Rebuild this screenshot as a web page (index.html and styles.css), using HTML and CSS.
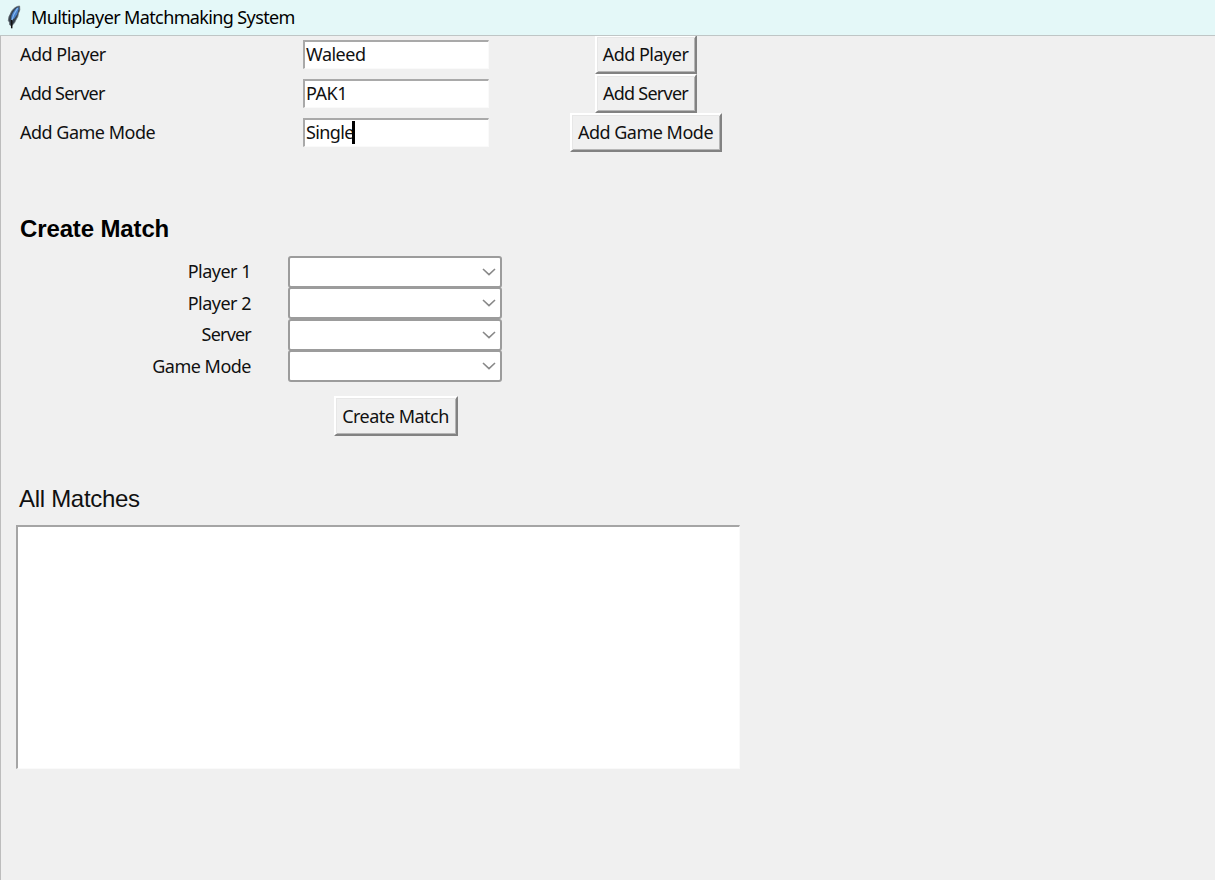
FILE: index.html
```
<!DOCTYPE html>
<html lang="en">
<head>
<meta charset="utf-8">
<title>Multiplayer Matchmaking System</title>
<link rel="stylesheet" href="styles.css">
</head>
<body>
<header class="titlebar">
  <svg class="feather" viewBox="0 0 16 26" aria-hidden="true">
    <path d="M13.6 2C10.5 2.2 7.6 4.2 5.6 7.2L4.2 10.2L3 12.5L2.3 16.5L3.4 18.2L3.8 21L5.8 21.8L8.5 18.8L9.6 16.5L11.8 12.5L12.4 9.5L13.8 6Z" fill="#36414c" stroke="#626b72" stroke-width="0.8"/>
    <path d="M12.6 3C9.5 4 6.8 8 5.4 12L5 16L8.4 14.5L11.2 10.3L12.6 5.7Z" fill="#477fc8"/>
    <path d="M11.6 4.2C8.8 8 6.8 12 5.7 17" fill="none" stroke="#8bbcf1" stroke-width="1.1"/>
    <path d="M5.7 16V24.3" stroke="#111" stroke-width="1.5"/>
  </svg>
  <span class="title">Multiplayer Matchmaking System</span>
</header>
<main class="window">
  <section class="add-form">
    <div class="row"><span class="label">Add Player</span><div class="entry">Waleed</div><div class="action"><button class="button">Add Player</button></div></div>
    <div class="row"><span class="label tight">Add Server</span><div class="entry">PAK1</div><div class="action"><button class="button tight">Add Server</button></div></div>
    <div class="row"><span class="label">Add Game Mode</span><div class="entry typing">Single<span class="caret"></span></div><div class="action"><button class="button wide">Add Game Mode</button></div></div>
  </section>
  <section class="match-form">
    <h2 class="heading">Create Match</h2>
    <div class="match-row"><span class="match-label">Player 1</span><div class="combo"><svg class="chevron" viewBox="0 0 14 8"><path d="M1 1L7 6.6L13 1"/></svg></div></div>
    <div class="match-row"><span class="match-label">Player 2</span><div class="combo"><svg class="chevron" viewBox="0 0 14 8"><path d="M1 1L7 6.6L13 1"/></svg></div></div>
    <div class="match-row"><span class="match-label tight">Server</span><div class="combo"><svg class="chevron" viewBox="0 0 14 8"><path d="M1 1L7 6.6L13 1"/></svg></div></div>
    <div class="match-row"><span class="match-label">Game Mode</span><div class="combo"><svg class="chevron" viewBox="0 0 14 8"><path d="M1 1L7 6.6L13 1"/></svg></div></div>
    <button class="button create">Create Match</button>
  </section>
  <section class="matches">
    <h2 class="heading light">All Matches</h2>
    <div class="listbox"></div>
  </section>
</main>
</body>
</html>
```
FILE: styles.css
```
* { box-sizing: border-box; }
body {
  margin: 0;
  height: 880px;
  overflow: hidden;
  display: flex;
  flex-direction: column;
  background: #f0f0f0;
  color: #111;
  font: 18px/24px "Noto Sans", "Open Sans", sans-serif;
  letter-spacing: -0.5px;
}
.titlebar {
  height: 36px;
  flex: none;
  display: flex;
  align-items: center;
  background: #e4f8f8;
  border-bottom: 1px solid #bfc6c6;
  padding-left: 6px;
}
.feather { width: 16px; height: 26px; margin-top: -2px; }
.title { margin: -2px 0 0 9px; letter-spacing: -0.62px; color: #000; }
.window { flex: 1; border-left: 1px solid #bdbdbd; overflow: hidden; }
.add-form { height: 179px; margin-top: -2px; }
.row {
  height: 39px;
  display: grid;
  grid-template-columns: 283px 186px 314px;
  padding-left: 19px;
  align-items: center;
}
.entry {
  height: 29px;
  margin-top: 1px;
  display: flex;
  align-items: center;
  background: #fff;
  border: 1px solid #fafafa;
  border-top: 2px solid #a9a9a9;
  border-left: 2px solid #a9a9a9;
  padding: 0 0 1px 1px;
}
.tight { letter-spacing: -0.8px; }
.typing { letter-spacing: -0.6px; }
.caret { width: 3px; height: 23px; margin-left: -2px; background: #000; }
.action { display: flex; justify-content: center; }
.action .button { margin-top: 1px; margin-bottom: -1px; padding-bottom: 2px; }
.button {
  width: 102px;
  height: 39px;
  padding: 0 1px 0 0;
  background: #f0f0f0;
  border: 2px solid;
  border-color: #fff #828282 #828282 #fff;
  box-shadow: inset 1px 1px #e7e7e7, inset -1px -1px #b5b5b5;
  font: inherit;
  letter-spacing: -0.5px;
  color: inherit;
  text-align: center;
}
.button.tight { letter-spacing: -0.75px; }
.button.wide { width: 152px; }
.heading {
  margin: 0 0 0 19px;
  font: bold 24px/32px "Liberation Sans", Arial, sans-serif;
  letter-spacing: -0.13px;
  color: #000;
}
.match-form { height: 270px; }
.match-form .heading { height: 43px; }
.match-row { display: flex; height: 31.5px; align-items: center; }
.match-label { width: 250px; margin-top: -1px; text-align: right; }
.combo {
  width: 214px;
  height: 32px;
  margin-left: 37px;
  display: flex;
  align-items: center;
  justify-content: flex-end;
  padding-right: 4px;
  background: #fff;
  border: 2px solid #9c9c9c;
  border-radius: 3px;
}
.chevron { width: 14px; height: 8px; fill: none; stroke: #888; stroke-width: 1.6; }
.button.create { display: block; width: 124px; height: 40px; margin: 14px 0 0 333px; padding-bottom: 1px; }
.light { margin-left: 18px; font-weight: normal; letter-spacing: -0.3px; color: #111; }
.listbox {
  width: 724px;
  height: 244px;
  margin: 10px 0 0 15px;
  background: #fff;
  border: 1px solid #fafafa;
  border-top: 2px solid #a5a5a5;
  border-left: 2px solid #a5a5a5;
}
```
